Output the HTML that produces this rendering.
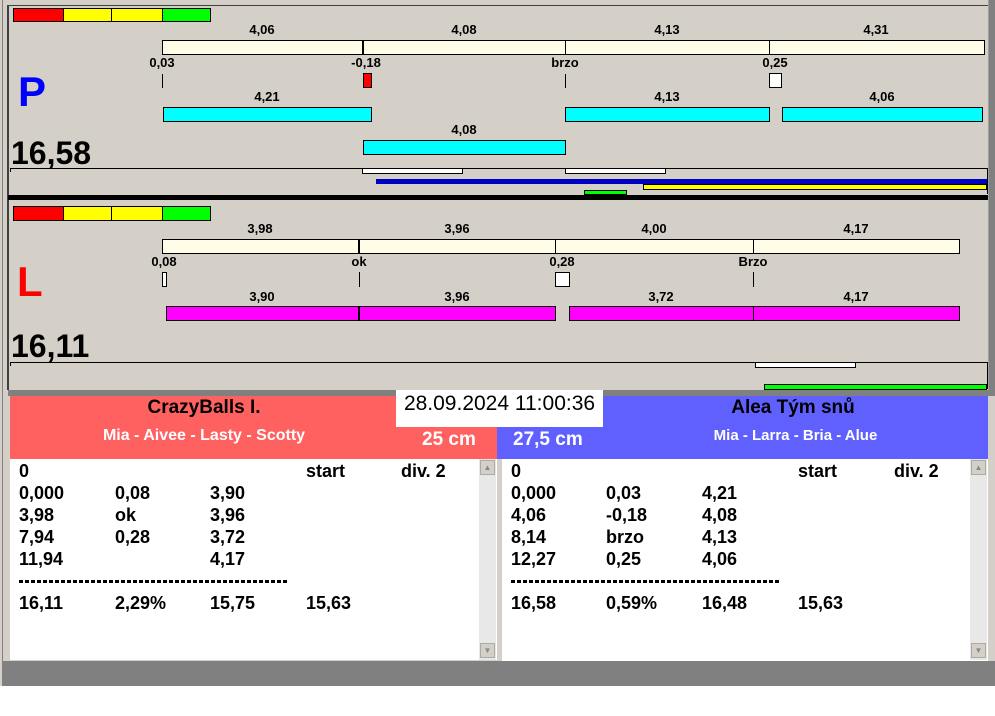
<!DOCTYPE html>
<html><head><meta charset="utf-8"><style>
*{margin:0;padding:0;box-sizing:border-box}
body{width:995px;height:716px;background:#fff;position:relative;overflow:hidden;font-family:"Liberation Sans",sans-serif}
div{position:absolute}
.t{font-size:13px;font-weight:bold;color:#000;transform:translateX(-50%);white-space:nowrap;line-height:14px}
.b{border:1px solid #000}
.cr{background:#fffde8}
.cy{background:#00ffff}
.mg{background:#ff00ff}
.vl{width:1px;background:#000}
.row{font-size:18px;font-weight:bold;line-height:22px;white-space:nowrap}
.dash{height:3px;background:repeating-linear-gradient(90deg,#000 0 4px,transparent 4px 6px)}
</style></head><body>
<div style="left:0;top:0;width:995px;height:686px;background:#d4d0c8"></div>
<div style="left:2px;top:0;width:1px;height:686px;background:#808080"></div>
<div style="left:7px;top:5px;width:2px;height:385px;background:#404040"></div>
<div style="left:7px;top:5px;width:982px;height:1px;background:#404040"></div>
<div style="left:988px;top:0;width:7px;height:390px;background:#a0a0a0"></div>
<div style="left:989px;top:0;width:6px;height:390px;background:#808080"></div>

<!-- P panel -->
<div class="b" style="left:13px;top:8px;width:51px;height:14px;background:#f00"></div>
<div class="b" style="left:63px;top:8px;width:49px;height:14px;background:#ff0"></div>
<div class="b" style="left:111px;top:8px;width:52px;height:14px;background:#ff0"></div>
<div class="b" style="left:162px;top:8px;width:49px;height:14px;background:#0f0"></div>

<div class="t" style="left:262px;top:23px">4,06</div>
<div class="t" style="left:464px;top:23px">4,08</div>
<div class="t" style="left:667px;top:23px">4,13</div>
<div class="t" style="left:876px;top:23px">4,31</div>
<div class="b cr" style="left:162px;top:40px;width:823px;height:15px"></div>
<div class="vl" style="left:362px;top:40px;height:15px;width:2px"></div>
<div class="vl" style="left:565px;top:40px;height:15px"></div>
<div class="vl" style="left:769px;top:40px;height:15px"></div>
<div class="t" style="left:162px;top:56px">0,03</div>
<div class="t" style="left:366px;top:56px">-0,18</div>
<div class="t" style="left:565px;top:56px">brzo</div>
<div class="t" style="left:775px;top:56px">0,25</div>
<div class="vl" style="left:162px;top:74px;height:14px"></div>
<div class="b" style="left:363px;top:73px;width:9px;height:15px;background:#f00"></div>
<div class="vl" style="left:565px;top:74px;height:14px"></div>
<div class="b" style="left:769px;top:73px;width:13px;height:15px;background:#fff"></div>

<div style="left:18px;top:70px;font-size:42px;font-weight:bold;color:#0000ff;line-height:44px">P</div>
<div class="t" style="left:267px;top:90px">4,21</div>
<div class="t" style="left:667px;top:90px">4,13</div>
<div class="t" style="left:882px;top:90px">4,06</div>
<div class="b cy" style="left:163px;top:107px;width:209px;height:15px"></div>
<div class="b cy" style="left:565px;top:107px;width:205px;height:15px"></div>
<div class="b cy" style="left:782px;top:107px;width:201px;height:15px"></div>
<div class="t" style="left:464px;top:123px">4,08</div>
<div class="b cy" style="left:363px;top:140px;width:203px;height:15px"></div>
<div style="left:11px;top:136px;font-size:32px;font-weight:bold;line-height:35px">16,58</div>

<div style="left:10px;top:168px;width:978px;height:1px;background:#000"></div>
<div style="left:10px;top:168px;width:1px;height:4px;background:#000"></div>
<div style="left:987px;top:168px;width:1px;height:26px;background:#000"></div>
<div class="b" style="left:362px;top:168px;width:101px;height:6px;background:#fff"></div>
<div class="b" style="left:565px;top:168px;width:101px;height:6px;background:#fff"></div>
<div style="left:376px;top:179px;width:611px;height:5px;background:#0000c0"></div>
<div class="b" style="left:643px;top:184px;width:344px;height:6px;background:#ff0"></div>
<div class="b" style="left:584px;top:190px;width:43px;height:5px;background:#0f0"></div>
<div style="left:8px;top:195px;width:980px;height:5px;background:#000"></div>

<!-- L panel -->
<div class="b" style="left:13px;top:206px;width:51px;height:15px;background:#f00"></div>
<div class="b" style="left:63px;top:206px;width:49px;height:15px;background:#ff0"></div>
<div class="b" style="left:111px;top:206px;width:52px;height:15px;background:#ff0"></div>
<div class="b" style="left:162px;top:206px;width:49px;height:15px;background:#0f0"></div>
<div class="t" style="left:260px;top:222px">3,98</div>
<div class="t" style="left:457px;top:222px">3,96</div>
<div class="t" style="left:654px;top:222px">4,00</div>
<div class="t" style="left:856px;top:222px">4,17</div>
<div class="b cr" style="left:162px;top:239px;width:798px;height:15px"></div>
<div class="vl" style="left:358px;top:239px;height:15px;width:2px"></div>
<div class="vl" style="left:555px;top:239px;height:15px"></div>
<div class="vl" style="left:753px;top:239px;height:15px"></div>
<div class="t" style="left:164px;top:255px">0,08</div>
<div class="t" style="left:359px;top:255px">ok</div>
<div class="t" style="left:562px;top:255px">0,28</div>
<div class="t" style="left:753px;top:255px">Brzo</div>
<div class="b" style="left:162px;top:272px;width:5px;height:15px;background:#fff"></div>
<div class="vl" style="left:359px;top:272px;height:15px"></div>
<div class="b" style="left:555px;top:272px;width:15px;height:15px;background:#fff"></div>
<div class="vl" style="left:753px;top:272px;height:15px"></div>
<div style="left:17px;top:260px;font-size:42px;font-weight:bold;color:#f00;line-height:44px">L</div>
<div class="t" style="left:262px;top:290px">3,90</div>
<div class="t" style="left:457px;top:290px">3,96</div>
<div class="t" style="left:661px;top:290px">3,72</div>
<div class="t" style="left:856px;top:290px">4,17</div>
<div class="b mg" style="left:166px;top:306px;width:390px;height:15px"></div>
<div class="vl" style="left:358px;top:306px;height:15px;width:2px"></div>
<div class="b mg" style="left:569px;top:306px;width:391px;height:15px"></div>
<div class="vl" style="left:753px;top:306px;height:15px"></div>
<div style="left:11px;top:329px;font-size:32px;font-weight:bold;line-height:35px">16,11</div>
<div style="left:10px;top:362px;width:978px;height:1px;background:#000"></div>
<div style="left:10px;top:362px;width:1px;height:4px;background:#000"></div>
<div style="left:987px;top:362px;width:1px;height:27px;background:#000"></div>
<div class="b" style="left:755px;top:362px;width:101px;height:6px;background:#fff"></div>
<div class="b" style="left:764px;top:384px;width:223px;height:6px;background:#0f0"></div>
<div style="left:8px;top:390px;width:987px;height:6px;background:#808080"></div>

<!-- bottom -->
<div style="left:10px;top:396px;width:487px;height:63px;background:#ff6060"></div>
<div style="left:497px;top:396px;width:491px;height:63px;background:#6060ff"></div>
<div style="left:10px;top:396px;width:388px;text-align:center;font-size:19px;font-weight:bold;line-height:24px">CrazyBalls I.</div>
<div style="left:10px;top:427px;width:388px;text-align:center;font-size:16px;font-weight:bold;color:#fff;line-height:18px">Mia - Aivee - Lasty - Scotty</div>
<div style="left:603px;top:396px;width:380px;text-align:center;font-size:19px;font-weight:bold;line-height:24px">Alea Tým snů</div>
<div style="left:603px;top:427px;width:385px;text-align:center;font-size:15px;font-weight:bold;color:#fff;line-height:18px">Mia - Larra - Bria - Alue</div>
<div style="left:396px;top:390px;width:207px;height:37px;background:#fff;font-size:21px;line-height:28px;text-align:center;white-space:nowrap">28.09.2024 11:00:36</div>
<div style="left:422px;top:429px;font-size:19px;font-weight:bold;color:#fff;line-height:22px">25 cm</div>
<div style="left:513px;top:429px;font-size:19px;font-weight:bold;color:#fff;line-height:22px">27,5 cm</div>

<div style="left:10px;top:459px;width:487px;height:202px;background:#fff;border-bottom:1px solid #d4d0c8"></div>
<div style="left:502px;top:459px;width:486px;height:202px;background:#fff"></div>
<div style="left:479px;top:459px;width:17px;height:201px;background:#e8e8e8"></div>
<div style="left:480px;top:460px;width:15px;height:15px;background:#d4d0c8;border:1px solid #aaa;font-size:8px;color:#888;text-align:center;line-height:13px">▲</div>
<div style="left:480px;top:643px;width:15px;height:15px;background:#d4d0c8;border:1px solid #aaa;font-size:8px;color:#888;text-align:center;line-height:13px">▼</div>
<div style="left:970px;top:459px;width:17px;height:201px;background:#e8e8e8"></div>
<div style="left:971px;top:460px;width:15px;height:15px;background:#d4d0c8;border:1px solid #aaa;font-size:8px;color:#888;text-align:center;line-height:13px">▲</div>
<div style="left:971px;top:643px;width:15px;height:15px;background:#d4d0c8;border:1px solid #aaa;font-size:8px;color:#888;text-align:center;line-height:13px">▼</div>

<div class="row" style="left:19px;top:460px">0</div>
<div class="row" style="left:306px;top:460px">start</div>
<div class="row" style="left:401px;top:460px">div. 2</div>
<div class="row" style="left:19px;top:482px">0,000</div><div class="row" style="left:115px;top:482px">0,08</div><div class="row" style="left:210px;top:482px">3,90</div>
<div class="row" style="left:19px;top:504px">3,98</div><div class="row" style="left:115px;top:504px">ok</div><div class="row" style="left:210px;top:504px">3,96</div>
<div class="row" style="left:19px;top:526px">7,94</div><div class="row" style="left:115px;top:526px">0,28</div><div class="row" style="left:210px;top:526px">3,72</div>
<div class="row" style="left:19px;top:548px">11,94</div><div class="row" style="left:210px;top:548px">4,17</div>
<div class="dash" style="left:19px;top:580px;width:270px"></div>
<div class="row" style="left:19px;top:592px">16,11</div><div class="row" style="left:115px;top:592px">2,29%</div><div class="row" style="left:210px;top:592px">15,75</div><div class="row" style="left:306px;top:592px">15,63</div>

<div class="row" style="left:511px;top:460px">0</div>
<div class="row" style="left:798px;top:460px">start</div>
<div class="row" style="left:894px;top:460px">div. 2</div>
<div class="row" style="left:511px;top:482px">0,000</div><div class="row" style="left:606px;top:482px">0,03</div><div class="row" style="left:702px;top:482px">4,21</div>
<div class="row" style="left:511px;top:504px">4,06</div><div class="row" style="left:606px;top:504px">-0,18</div><div class="row" style="left:702px;top:504px">4,08</div>
<div class="row" style="left:511px;top:526px">8,14</div><div class="row" style="left:606px;top:526px">brzo</div><div class="row" style="left:702px;top:526px">4,13</div>
<div class="row" style="left:511px;top:548px">12,27</div><div class="row" style="left:606px;top:548px">0,25</div><div class="row" style="left:702px;top:548px">4,06</div>
<div class="dash" style="left:511px;top:580px;width:270px"></div>
<div class="row" style="left:511px;top:592px">16,58</div><div class="row" style="left:606px;top:592px">0,59%</div><div class="row" style="left:702px;top:592px">16,48</div><div class="row" style="left:798px;top:592px">15,63</div>

<div style="left:3px;top:661px;width:992px;height:25px;background:#808080"></div>
</body></html>
